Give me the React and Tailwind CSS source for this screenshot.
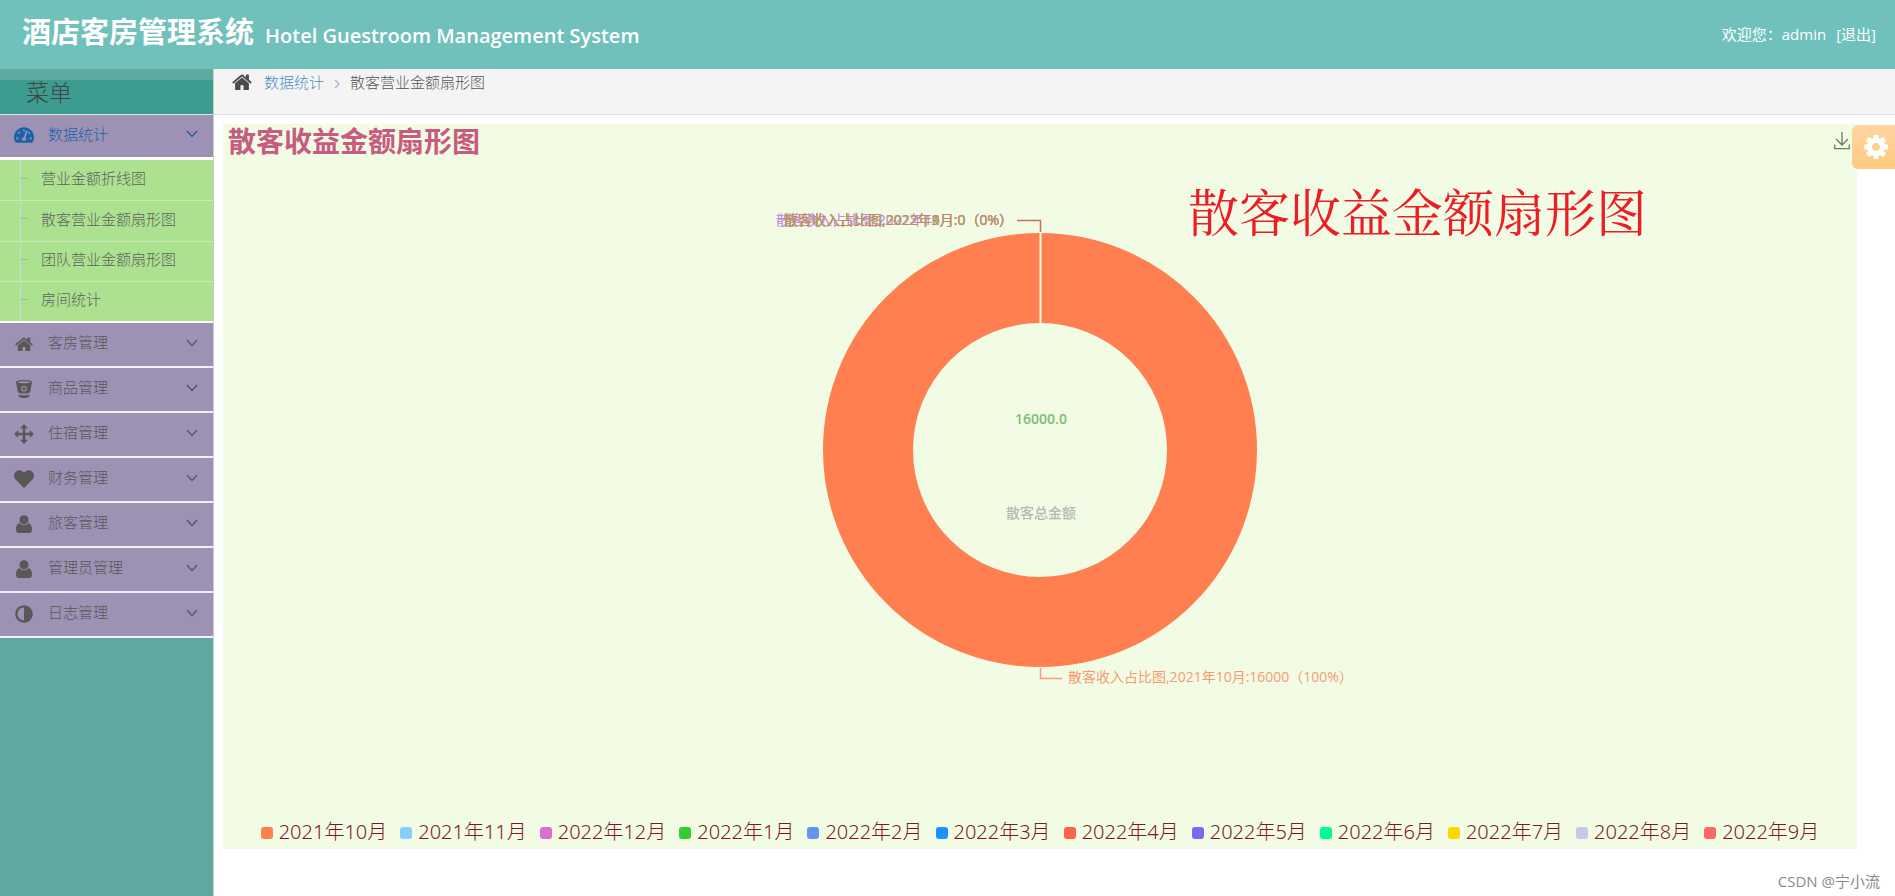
import React from "react";
import { FaTachometerAlt, FaHeart, FaAdjust } from "react-icons/fa";

const svgProps = { fill: "currentColor", "aria-hidden": true };

function HomeIcon({ className }) {
  return (
    <svg viewBox="0 0 1664 1408" className={className} {...svgProps}>
      <path d="M1408 864v480q0 26-19 45t-45 19H960v-384H704v384H320q-26 0-45-19t-19-45V864q0-1 .5-3t.5-3l575-474 575 474q1 2 1 6zm223-69l-62 74q-8 9-21 11h-3q-13 0-21-7L832 296 140 873q-12 8-24 7-13-2-21-11l-62-74q-8-10-7-23.500t11-21.500l719-599q32-26 76-26t76 26l244 204v-195q0-14 9-23t23-9h192q14 0 23 9t9 23v408l219 182q10 8 11 21.500t-7 23.500z" />
    </svg>
  );
}

function GearIcon({ className }) {
  return (
    <svg viewBox="0 0 1536 1536" className={className} {...svgProps}>
      <path d="M1024 768q0-106-75-181t-181-75-181 75-75 181 75 181 181 75 181-75 75-181zm512-109v222q0 12-8 23t-20 13l-185 28q-19 54-39 91 35 50 107 138 10 12 10 25t-9 23q-27 37-99 108t-94 71q-12 0-26-9l-138-108q-44 23-91 38-16 136-29 186-7 28-36 28H657q-14 0-24.500-8.500T621 1506l-28-184q-49-16-90-37l-141 107q-10 9-25 9-14 0-25-11-126-114-165-168-7-10-7-23 0-12 8-23 15-21 51-66.500t54-70.500q-27-50-41-99L29 913q-13-2-21-12.500T0 877V655q0-12 8-23t19-13l186-28q14-46 39-92-40-57-107-138-10-12-10-24 0-10 9-23 26-36 98.500-107.500T337 135q13 0 26 10l138 107q44-23 91-38 16-136 29-186 7-28 36-28h222q14 0 24.500 8.500T915 30l28 184q49 16 90 37l142-107q9-9 24-9 13 0 25 10 129 119 165 170 7 8 7 22 0 12-8 23-15 21-51 66.500t-54 70.500q26 50 41 98l183 28q13 2 21 12.500t8 23.500z" />
    </svg>
  );
}

function BucketIcon({ className }) {
  return (
    <svg viewBox="0 0 16 18" className={className} {...svgProps}>
      <path
        fillRule="evenodd"
        d="M0 2.200C0 .9 3.500 0 8 0s8 .9 8 2.200l-.3 1.500-1.500 8.300c-.1.900-2.900 1.500-6.200 1.500S1.900 12.900 1.800 12L.3 3.700zM1.700 2.200C2.500 2.900 5 3.300 8 3.300s5.500-.4 6.300-1.100C13.500 1.600 11 1.200 8 1.200s-5.500.4-6.300 1zM8 6a2.800 2.800 0 1 0 0 5.600A2.800 2.800 0 0 0 8 6zm0 1.100a1.700 1.700 0 1 1 0 3.400 1.700 1.700 0 0 1 0-3.400z"
      />
      <circle cx="8" cy="8.800" r="1" />
      <path d="M2.300 14.200c1.300.7 3.300 1 5.700 1s4.400-.3 5.700-1l-.4 2c-.2 1.100-2.500 1.800-5.300 1.800s-5.100-.7-5.300-1.800z" />
    </svg>
  );
}

function MoveIcon({ className }) {
  return (
    <svg viewBox="0 0 20 20" className={className} {...svgProps}>
      <path d="M10 0l4 4.200h-2.700v4.500h4.500V6L20 10l-4.200 4v-2.700h-4.500v4.500H14L10 20l-4-4.200h2.700v-4.500H4.200V14L0 10l4.200-4v2.700h4.500V4.200H6z" />
    </svg>
  );
}

function UserIcon({ className }) {
  return (
    <svg viewBox="0 0 16 18" className={className} {...svgProps}>
      <path d="M12.600 4.800a4.600 4.600 0 1 1-9.200 0 4.600 4.600 0 0 1 9.200 0zM3.700 8.200C1 8.500 0 11 0 14.700 0 16.800 1.300 18 3.200 18h9.600c1.900 0 3.200-1.200 3.200-3.300 0-3.700-1-6.200-3.700-6.500A5.900 5.900 0 0 1 8 10.200a5.900 5.900 0 0 1-4.300-2z" />
    </svg>
  );
}

function Chevron({ className }) {
  return (
    <svg viewBox="0 0 12 8" className={className} fill="none" stroke="currentColor" strokeWidth="1.300" aria-hidden="true">
      <path d="M1 1l5 5.500L11 1" />
    </svg>
  );
}

const subItems = ["营业金额折线图", "散客营业金额扇形图", "团队营业金额扇形图", "房间统计"];

const menuItems = [
  { label: "客房管理", icon: <HomeIcon className="w-[18px]" /> },
  { label: "商品管理", icon: <BucketIcon className="w-4" /> },
  { label: "住宿管理", icon: <MoveIcon className="w-5" /> },
  { label: "财务管理", icon: <FaHeart className="size-5" /> },
  { label: "旅客管理", icon: <UserIcon className="w-4" /> },
  { label: "管理员管理", icon: <UserIcon className="w-4" /> },
  { label: "日志管理", icon: <FaAdjust className="size-[18px] -scale-x-100" /> },
];

const legend = [
  { label: "2021年10月", color: "#ff7f50" },
  { label: "2021年11月", color: "#87cefa" },
  { label: "2022年12月", color: "#da70d6" },
  { label: "2022年1月", color: "#32cd32" },
  { label: "2022年2月", color: "#6495ed" },
  { label: "2022年3月", color: "#1e90ff" },
  { label: "2022年4月", color: "#ff6347" },
  { label: "2022年5月", color: "#7b68ee" },
  { label: "2022年6月", color: "#00fa9a" },
  { label: "2022年7月", color: "#ffd700" },
  { label: "2022年8月", color: "#c8c8e8" },
  { label: "2022年9月", color: "#ff6666", labelColor: "#d07048" },
];

function MenuButton({ label, icon, active }) {
  return (
    <button
      type="button"
      aria-expanded={Boolean(active)}
      className={
        "flex w-full items-center bg-[#9d91b4] pr-[15px] pb-1 text-left text-[15px] " +
        (active ? "h-[42px] text-[#1963aa]" : "h-[43px] text-[#585858]")
      }
    >
      <span className="mt-[2px] flex w-12 justify-center">{icon}</span>
      <span className="flex-1 font-light">{label}</span>
      <Chevron className="w-3" />
    </button>
  );
}

function Sidebar() {
  return (
    <nav className="w-[214px] shrink-0 border-r border-[#cccccc] bg-[#5eaaa0]">
      <h2 className="mt-[11px] h-[34px] bg-[#3c9c90] pl-[26px] text-[23px] leading-[24px] font-light text-[#444444]">菜单</h2>
      <ul className="border-t border-[#e5e5e5]">
        <li>
          <MenuButton label="数据统计" icon={<FaTachometerAlt className="size-5" />} active />
          <ul className="grid h-[166px] grid-rows-4 border-t-3 border-b-2 border-white bg-[#abe18f]">
            {subItems.map((t, i) => (
              <li key={t} className={"flex pl-5 " + (i ? "border-t border-dotted border-[#e4f0dc]" : "")}>
                <a href="#" className="flex flex-1 items-center border-l border-[#ccd6dd] pb-1 text-[15px] font-light text-[#616161]">
                  <span className="mr-[13px] w-[7px] border-t border-[#9dbd8c]" />
                  {t}
                </a>
              </li>
            ))}
          </ul>
        </li>
        {menuItems.map((m) => (
          <li key={m.label} className="border-b-2 border-[#f3eff8]">
            <MenuButton {...m} />
          </li>
        ))}
      </ul>
    </nav>
  );
}

function Donut() {
  return (
    <svg width="634" height="480" viewBox="723 210 634 480" className="overflow-visible text-sm" role="img" aria-label="散客收入占比图">
      <circle cx="1040" cy="450" r="172" fill="none" stroke="#ff7f50" strokeWidth="90" />
      <path d="M1040.500 232v92" stroke="#f5ffe8" strokeWidth="2" />
      <path d="M1017 220.500h23.500V232" fill="none" stroke="#c9705c" strokeWidth="1.500" />
      <path d="M1040.500 668v10.500H1062" fill="none" stroke="#ff9a72" strokeWidth="1.500" />
      <g textAnchor="end" fillOpacity=".8">
        {legend.slice(1).map((m) => (
          <text key={m.label} x="1013" y="225" fill={m.labelColor || m.color}>
            {"散客收入占比图," + m.label + ":0（0%）"}
          </text>
        ))}
      </g>
      <text x="1068" y="682" fill="#f79a74">散客收入占比图,2021年10月:16000（100%）</text>
      <g textAnchor="middle">
        <text x="1041" y="424" fill="#7dbd75" fontWeight="600">16000.0</text>
        <text x="1041" y="518" fill="#b3b9b8" fontWeight="500">散客总金额</text>
      </g>
    </svg>
  );
}

export default function App() {
  return (
    <div className="flex min-h-screen flex-col bg-white font-['Open_Sans','Noto_Sans_CJK_SC',sans-serif]">
      <header className="flex h-[69px] items-center justify-between bg-[#70c1bb] pr-[19px] pl-[22px] text-white">
        <h1 className="flex items-baseline gap-[11px] pb-[6px]">
          <span className="text-[29px] font-bold">酒店客房管理系统</span>
          <span className="text-xl font-semibold">Hotel Guestroom Management System</span>
        </h1>
        <p className="flex text-[15px]">
          <span>欢迎您：</span>
          <span className="mr-[10px]">admin</span>
          <a href="#">[退出]</a>
        </p>
      </header>
      <div className="flex flex-1">
        <Sidebar />
        <main className="relative flex min-w-0 flex-1 flex-col">
          <div className="flex h-[46px] items-start border-b border-[#dde2ea] bg-[#f4f4f4] pl-[18px] text-[15px] leading-[26px] font-light">
            <HomeIcon className="mt-1 w-5 text-[#4c4c4c]" />
            <a href="#" className="ml-3 text-[#4c8fbd]">数据统计</a>
            <svg viewBox="0 0 6 10" className="mx-[10px] mt-[10px] h-[10px] w-[6px]" fill="none" stroke="#b2b6bf" strokeWidth="1.500" aria-hidden="true">
              <path d="M1 1l4 4-4 4" />
            </svg>
            <span className="text-[#555555]">散客营业金额扇形图</span>
          </div>
          <section className="relative mt-[9px] mr-[38px] ml-[9px] flex h-[725px] flex-col items-center bg-[#f2fce4]">
            <div className="flex w-full items-start justify-between pr-[7px] pl-[5px]">
              <h2 className="text-[28px] leading-[34px] font-bold text-[#c75b80]">散客收益金额扇形图</h2>
              <button type="button" aria-label="保存为图片" className="mt-2">
                <svg viewBox="0 0 16 18" className="w-4" fill="none" stroke="#6f7868" strokeWidth="1.300" aria-hidden="true">
                  <path d="M8 0v13M2 7l6 6 6-6M.7 12.500v4.200h14.600v-4.200" />
                </svg>
              </button>
            </div>
            <div className="mt-[52px]">
              <Donut />
            </div>
            <ul className="mt-auto mb-[3px] flex gap-[13px] font-['Noto_Sans','Noto_Sans_CJK_SC',sans-serif] text-xl leading-7 text-[#7d1828]">
              {legend.map((m) => (
                <li key={m.label} className="flex items-center gap-[6px] font-light">
                  <span className="mt-[2px] h-3 w-3 rounded-[3px]" style={{ backgroundColor: m.color }} />
                  {m.label}
                </li>
              ))}
            </ul>
            <p className="absolute top-14 right-[210px] font-['Noto_Serif_CJK_SC','Noto_Sans_CJK_SC',serif] text-[51px] leading-[60px] font-normal text-[#ee1c24]">
              散客收益金额扇形图
            </p>
          </section>
          <button
            type="button"
            aria-label="设置"
            className="absolute top-14 right-0 flex h-11 w-[43px] items-center justify-center rounded-l-md bg-linear-to-b from-[#ffd6a3] to-[#ffca80] pl-1 text-white"
          >
            <GearIcon className="size-6" />
          </button>
          <footer className="mt-auto self-end pr-[15px] pb-1 text-[15px] text-[#8a8a8a]">CSDN @宁小流</footer>
        </main>
      </div>
    </div>
  );
}
